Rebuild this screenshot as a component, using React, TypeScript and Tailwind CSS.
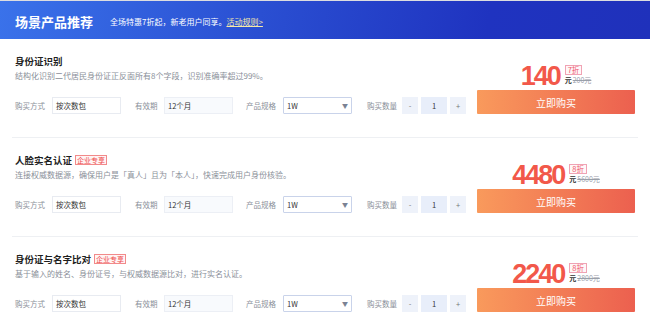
import React from "react";

const cjk = "font-['Noto_Sans_CJK_SC','Noto_Sans',sans-serif]";

type Item = {
  title: string;
  tag?: boolean;
  desc: string;
  price: string;
  disc: string;
  orig: string;
};

const items: Item[] = [
  {
    title: "身份证识别",
    desc: "结构化识别二代居民身份证正反面所有8个字段，识别准确率超过99%。",
    price: "140",
    disc: "7折",
    orig: "200元",
  },
  {
    title: "人脸实名认证",
    tag: true,
    desc: "连接权威数据源，确保用户是「真人」且为「本人」，快速完成用户身份核验。",
    price: "4480",
    disc: "8折",
    orig: "5600元",
  },
  {
    title: "身份证与名字比对",
    tag: true,
    desc: "基于输入的姓名、身份证号，与权威数据源比对，进行实名认证。",
    price: "2240",
    disc: "8折",
    orig: "2800元",
  },
];

function Card({ it }: { it: Item }) {
  return (
    <div className="flex border-b border-[#eef0f3] h-[99px]">
      <div className="flex-1 pl-[3px] pt-[16px]">
        <div className="flex items-center h-[12px]">
          <span className="text-[9.5px] leading-[12px] font-bold text-[#1f1f1f]">{it.title}</span>
          {it.tag && (
            <span className="ml-[3px] border border-[#f28a8a] bg-[#fff4f4] text-[#ee4a4a] text-[7px] leading-[8px] px-[1px] h-[10px] flex items-center">
              企业专享
            </span>
          )}
        </div>
        <div className="mt-[4px] text-[8px] leading-[10px] text-[#8a8f99]">{it.desc}</div>
        <div className="mt-[16px] flex items-center h-[17px] text-[7.5px]">
          <span className="text-[#8a8f99] w-[37px]">购买方式</span>
          <div className="w-[69px] h-[17px] border border-[#e8ebf1] bg-white flex items-center pl-[3px] text-[#333]">按次数包</div>
          <span className="text-[#8a8f99] ml-[14px] w-[29px]">有效期</span>
          <div className="w-[69px] h-[17px] border border-[#eceff5] bg-[#f8fafd] flex items-center pl-[3px] text-[#333]">12个月</div>
          <span className="text-[#8a8f99] ml-[13px] w-[37px]">产品规格</span>
          <div className="w-[69px] h-[17px] border border-[#c9d3ea] bg-white flex items-center justify-between pl-[3px] pr-[3px] text-[#333] rounded-[1px]">
            <span>1W</span>
            <span className="text-[#7a8294] text-[6px]">▼</span>
          </div>
          <span className="text-[#8a8f99] ml-[15px] w-[35px]">购买数量</span>
          <div className="w-[16px] h-[17px] bg-[#eef2fa] flex items-center justify-center text-[#777]">-</div>
          <div className="ml-[3px] w-[26px] h-[17px] bg-[#e8eefa] flex items-center justify-center text-[#333]">1</div>
          <div className="ml-[3px] w-[16px] h-[17px] bg-[#eef2fa] flex items-center justify-center text-[#777]">+</div>
        </div>
      </div>
      <div className="w-[158px] mr-[3px] pt-[24px] flex flex-col items-center">
        <div className="flex items-start h-[27px]">
          <span className="font-['Liberation_Sans',Arial,sans-serif] font-bold text-[27px] leading-[25px] tracking-[-2px] text-[#f2584a] mt-[1px]">
            {it.price}
          </span>
          <div className="ml-[5px] flex flex-col items-start mt-[2px]">
            <span className="border border-[#f0a3b4] text-[#ee5a6e] text-[7.5px] leading-[8px] h-[10px] px-[2px] bg-[#fff7f8] flex items-center">
              {it.disc}
            </span>
            <div className="flex items-center mt-[1px] text-[7px] leading-[8px]">
              <span className="text-[#333] font-bold">元</span>
              <span className="ml-[1px] text-[#9aa0aa] line-through">{it.orig}</span>
            </div>
          </div>
        </div>
        <button className="w-full h-[24px] bg-[linear-gradient(90deg,#f99a5c,#ec604f)] text-white text-[10px] rounded-[1px]">
          立即购买
        </button>
      </div>
    </div>
  );
}

export default function App() {
  return (
    <div className={`w-[650px] h-[335px] bg-white overflow-hidden ${cjk}`}>
      <div className="h-[1px] bg-[#dcdde0]" />
      <div className="h-[38px] bg-[linear-gradient(100deg,#3a72ea_0%,#2a4fd2_40%,#1f33c0_75%,#1f31bb_100%)] flex items-center pl-[15px] pt-[4px]">
        <span className="text-white font-bold text-[13px] leading-[16px]">场景产品推荐</span>
        <span className="ml-[17px] text-white text-[8px] leading-[10px]">全场特惠7折起，新老用户同享。</span>
        <span className="text-[#f6e9a8] text-[8px] leading-[10px] underline">活动规则&gt;</span>
      </div>
      <div className="px-[12px]">
        {items.map((it) => (
          <Card key={it.title} it={it} />
        ))}
      </div>
    </div>
  );
}
